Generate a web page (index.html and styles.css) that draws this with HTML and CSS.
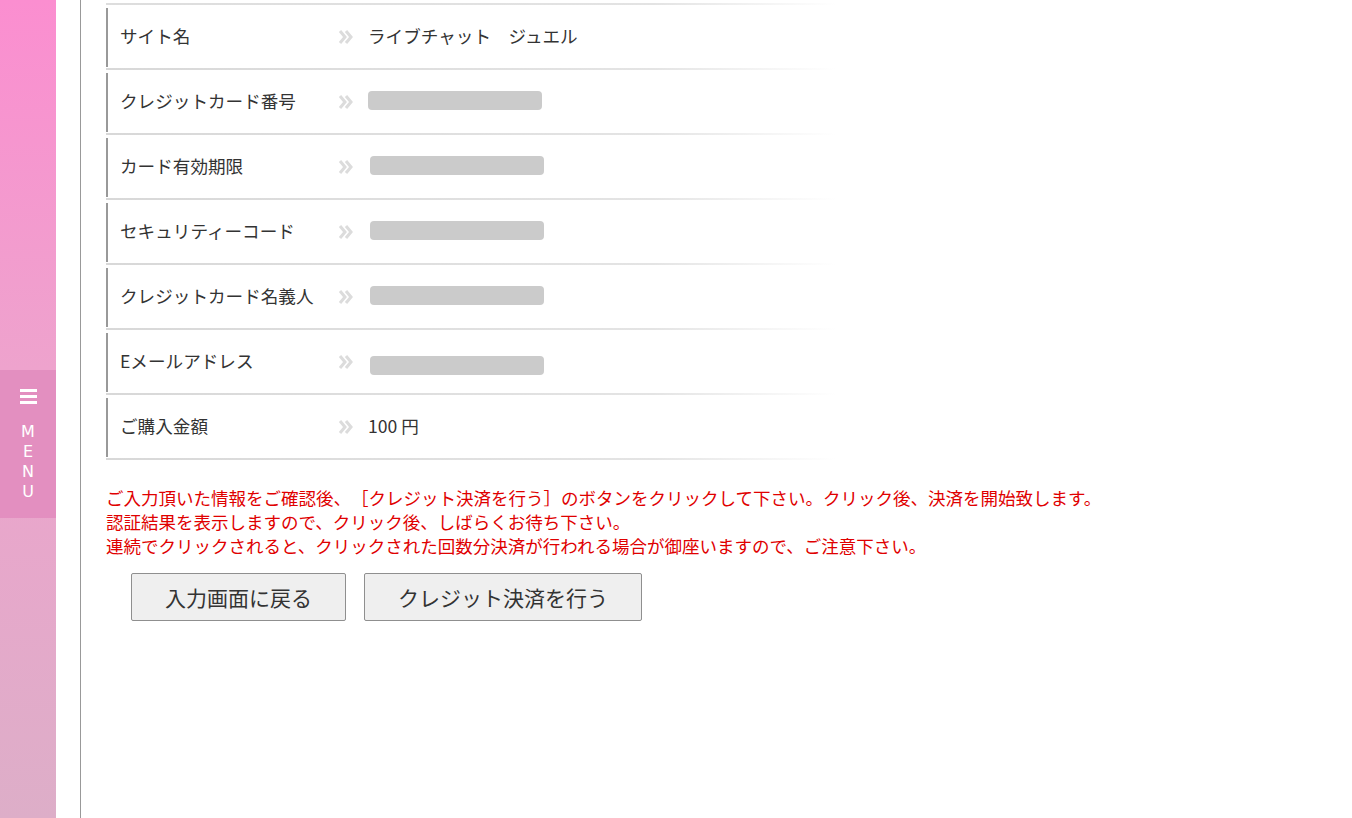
FILE: index.html
```html
<!DOCTYPE html>
<html lang="ja">
<head>
<meta charset="utf-8">
<title>確認</title>
<link rel="stylesheet" href="styles.css">
</head>
<body>
<div class="page">
  <aside class="sidebar">
    <div class="menu">
      <div class="burger"><span></span><span></span><span></span></div>
      <div class="menu-text">M<br>E<br>N<br>U</div>
    </div>
  </aside>
  <div class="gutter"></div>
  <main class="content">
    <div class="topline"></div>
    <div class="row"><div class="cell"><div class="label">サイト名</div><svg class="chev" viewBox="0 0 16 16"><path d="M2 2 L7 8 L2 14 M8 2 L13 8 L8 14"/></svg><div class="value">ライブチャット　ジュエル</div></div></div>
    <div class="row"><div class="cell"><div class="label">クレジットカード番号</div><svg class="chev" viewBox="0 0 16 16"><path d="M2 2 L7 8 L2 14 M8 2 L13 8 L8 14"/></svg><div class="value"><span class="mask"></span></div></div></div>
    <div class="row"><div class="cell"><div class="label">カード有効期限</div><svg class="chev" viewBox="0 0 16 16"><path d="M2 2 L7 8 L2 14 M8 2 L13 8 L8 14"/></svg><div class="value"><span class="mask m2"></span></div></div></div>
    <div class="row"><div class="cell"><div class="label">セキュリティーコード</div><svg class="chev" viewBox="0 0 16 16"><path d="M2 2 L7 8 L2 14 M8 2 L13 8 L8 14"/></svg><div class="value"><span class="mask m2"></span></div></div></div>
    <div class="row"><div class="cell"><div class="label">クレジットカード名義人</div><svg class="chev" viewBox="0 0 16 16"><path d="M2 2 L7 8 L2 14 M8 2 L13 8 L8 14"/></svg><div class="value"><span class="mask m2"></span></div></div></div>
    <div class="row"><div class="cell"><div class="label">Eメールアドレス</div><svg class="chev" viewBox="0 0 16 16"><path d="M2 2 L7 8 L2 14 M8 2 L13 8 L8 14"/></svg><div class="value"><span class="mask m2 low"></span></div></div></div>
    <div class="row"><div class="cell"><div class="label">ご購入金額</div><svg class="chev" viewBox="0 0 16 16"><path d="M2 2 L7 8 L2 14 M8 2 L13 8 L8 14"/></svg><div class="value">100 円</div></div></div>
    <p class="notice">ご入力頂いた情報をご確認後、［クレジット決済を行う］のボタンをクリックして下さい。クリック後、決済を開始致します。<br>認証結果を表示しますので、クリック後、しばらくお待ち下さい。<br>連続でクリックされると、クリックされた回数分決済が行われる場合が御座いますので、ご注意下さい。</p>
    <div class="buttons">
      <button class="btn b1">入力画面に戻る</button>
      <button class="btn b2">クレジット決済を行う</button>
    </div>
  </main>
</div>
</body>
</html>
```

FILE: styles.css
```css
html, body {
  margin: 0;
  padding: 0;
  background: #fff;
  height: 100%;
  overflow: hidden;
}
body {
  font-family: "Noto Sans CJK JP", "Noto Sans", sans-serif;
  color: #333;
  text-spacing-trim: space-all;
}
.page {
  display: flex;
  height: 818px;
}
.sidebar {
  width: 56px;
  flex: none;
  background: linear-gradient(180deg, #fb8ed0 0%, #eea3cd 45%, #ddaec8 100%);
  display: flex;
  flex-direction: column;
}
.menu {
  margin-top: 370px;
  height: 148px;
  background: #e38fc0;
  display: flex;
  flex-direction: column;
  align-items: center;
}
.burger {
  margin-top: 19px;
  width: 17px;
  display: flex;
  flex-direction: column;
  gap: 3px;
}
.burger span {
  display: block;
  height: 3px;
  background: #fff;
}
.menu-text {
  margin-top: 18px;
  color: #fff;
  font-family: "DejaVu Sans", sans-serif;
  font-size: 16px;
  line-height: 20px;
  text-align: center;
}
.gutter {
  width: 24px;
  flex: none;
  border-right: 1px solid #999;
}
.content {
  padding-left: 25px;
  flex: 1;
}
.topline {
  width: 730px;
  margin-top: 3px;
  height: 2px;
  background: linear-gradient(90deg, #ddd 0%, #e3e3e3 75%, #fff 100%);
}
.row {
  width: 730px;
  padding: 3px 0 3px;
  position: relative;
}
.row::after {
  content: "";
  position: absolute;
  left: 0;
  right: 0;
  bottom: 0;
  height: 2px;
  background: linear-gradient(90deg, #d8d8d8 0%, #e4e4e4 75%, #fff 100%);
}
.cell {
  height: 59px;
  box-sizing: border-box;
  padding-bottom: 5px;
  border-left: 2px solid #999;
  display: flex;
  align-items: center;
  font-size: 17.6px;
}
.label {
  width: 218px;
  padding-left: 12px;
  white-space: nowrap;
}
.chev {
  width: 16px;
  height: 16px;
  margin-right: 14px;
  margin-top: 3px;
  fill: none;
  stroke: #dcdcdc;
  stroke-width: 3;
  flex: none;
}
.value {
  white-space: nowrap;
  display: flex;
  align-items: center;
}
.mask {
  display: inline-block;
  width: 174px;
  height: 19px;
  border-radius: 4px;
  background: #cbcbcb;
}
.m2 {
  margin-left: 2px;
}
.low {
  margin-top: 10px;
}
.notice {
  margin: 26px 0 0;
  color: #e00000;
  font-size: 17.5px;
  line-height: 24px;
  white-space: nowrap;
}
.buttons {
  display: flex;
  gap: 18px;
  margin-top: 15px;
  padding-left: 25px;
}
.btn {
  height: 48px;
  background: #efefef;
  border: 1px solid #8f8f8f;
  border-radius: 2px;
  font-family: "Noto Sans CJK JP", sans-serif;
  font-size: 21px;
  color: #333;
  padding: 0;
  text-spacing-trim: space-all;
}
.b1 { width: 215px; }
.b2 { width: 278px; }
```
